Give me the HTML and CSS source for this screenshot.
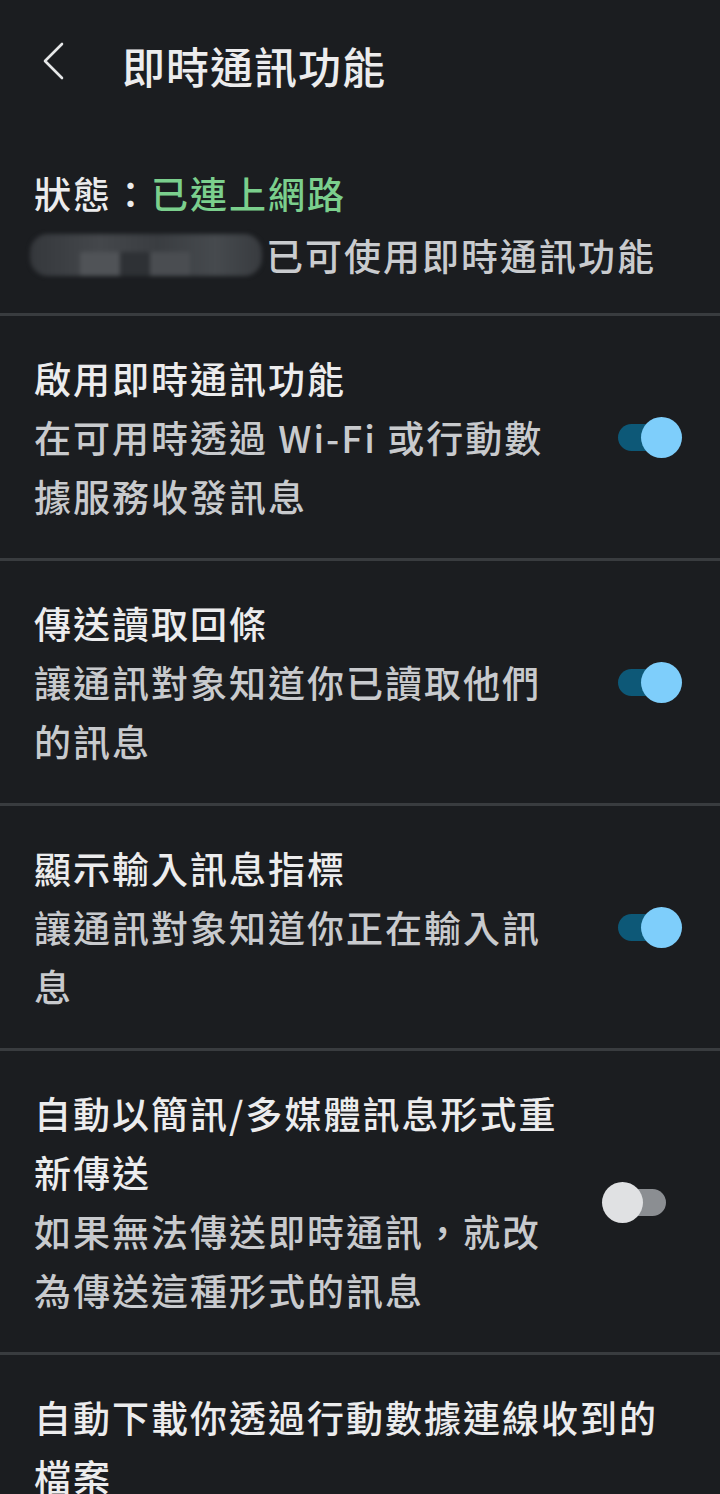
FILE: index.html
```html
<!DOCTYPE html>
<html lang="zh-Hant">
<head>
<meta charset="utf-8">
<title>即時通訊功能</title>
<link rel="stylesheet" href="styles.css">
</head>
<body>
<div class="screen">
  <header class="topbar">
    <svg class="back" width="24" height="40" viewBox="0 0 24 40" aria-hidden="true">
      <path d="M19 2 L2 19 L19 36" fill="none" stroke="#e6e7e8" stroke-width="2.6" stroke-linecap="round" stroke-linejoin="round"/>
    </svg>
    <h1 class="title">即時通訊功能</h1>
  </header>

  <section class="status">
    <div class="status-line">狀態：<span class="ok">已連上網路</span></div>
    <div class="status-line sub"><span class="masked" aria-hidden="true"><i class="m1"></i><i class="m2"></i><i class="m3"></i><i class="m4"></i></span>已可使用即時通訊功能</div>
  </section>

  <div class="row">
    <div class="text">
      <div class="row-title">啟用即時通訊功能</div>
      <div class="row-sub">在可用時透過 Wi-Fi 或行動數據服務收發訊息</div>
    </div>
    <div class="toggle on"><span class="track"></span><span class="thumb"></span></div>
  </div>

  <div class="row">
    <div class="text">
      <div class="row-title">傳送讀取回條</div>
      <div class="row-sub">讓通訊對象知道你已讀取他們的訊息</div>
    </div>
    <div class="toggle on"><span class="track"></span><span class="thumb"></span></div>
  </div>

  <div class="row">
    <div class="text">
      <div class="row-title">顯示輸入訊息指標</div>
      <div class="row-sub">讓通訊對象知道你正在輸入訊息</div>
    </div>
    <div class="toggle on"><span class="track"></span><span class="thumb"></span></div>
  </div>

  <div class="row">
    <div class="text">
      <div class="row-title">自動以簡訊/多媒體訊息形式重新傳送</div>
      <div class="row-sub">如果無法傳送即時通訊，就改為傳送這種形式的訊息</div>
    </div>
    <div class="toggle off"><span class="track"></span><span class="thumb"></span></div>
  </div>

  <div class="row wide">
    <div class="text">
      <div class="row-title">自動下載你透過行動數據連線收到的檔案</div>
    </div>
  </div>
</div>
</body>
</html>
```
FILE: styles.css
```css
html, body {
  margin: 0;
  padding: 0;
  background: #1b1d20;
}

.screen {
  width: 720px;
  min-height: 1494px;
  background: #1b1d20;
  font-family: "Noto Sans CJK TC", "Noto Sans", sans-serif;
  color: #ebebec;
}

.topbar {
  height: 130px;
  display: flex;
  align-items: center;
  padding-left: 43px;
  box-sizing: border-box;
}

.back {
  display: block;
  margin-top: -6px;
}

.title {
  margin: 0 0 0 55px;
  font-size: 43px;
  font-weight: 500;
  letter-spacing: 1px;
  line-height: 60px;
  color: #ececed;
}

.status {
  padding: 32px 34px 27px;
  border-bottom: 3px solid #393c3f;
}

.status-line {
  font-size: 37px;
  line-height: 62px;
  letter-spacing: 2px;
  font-weight: 500;
  color: #ebebec;
  white-space: nowrap;
}

.status-line.sub {
  color: #c9cbce;
  display: flex;
  align-items: center;
}

.ok {
  color: #7bcf8d;
}

.masked {
  position: relative;
  display: inline-block;
  width: 232px;
  height: 50px;
  margin-right: 4px;
  margin-left: -4px;
  filter: blur(2px);
}

.masked i {
  position: absolute;
  display: block;
  border-radius: 18px;
}

.masked .m1 {
  left: 0; top: 4px; width: 232px; height: 42px;
  background: linear-gradient(90deg, #35383c 0%, #44474b 30%, #3a3d41 55%, #464a4e 80%, #383b3f 100%);
}
.masked .m2 {
  left: 50px; top: 22px; width: 40px; height: 24px;
  background: #505357; border-radius: 2px;
}
.masked .m3 {
  left: 90px; top: 22px; width: 30px; height: 24px;
  background: #2e3135; border-radius: 2px;
}
.masked .m4 {
  left: 120px; top: 22px; width: 40px; height: 24px;
  background: #4a4d51; border-radius: 2px;
}

.row {
  display: flex;
  align-items: center;
  padding: 33px 38px 32px 34px;
  border-bottom: 3px solid #393c3f;
}

.row .text {
  width: 540px;
}

.row.wide .text {
  width: 640px;
}

.row-title {
  font-size: 37px;
  line-height: 59px;
  letter-spacing: 2px;
  font-weight: 500;
  color: #ececed;
}

.row-sub {
  font-size: 37px;
  line-height: 59px;
  letter-spacing: 2px;
  font-weight: 500;
  color: #c8cacd;
}

.toggle {
  position: relative;
  margin-left: auto;
  width: 80px;
  height: 41px;
  flex-shrink: 0;
}

.toggle .track {
  position: absolute;
  left: 16px;
  top: 7px;
  width: 48px;
  height: 27px;
  border-radius: 14px;
}

.toggle .thumb {
  position: absolute;
  top: 0;
  width: 41px;
  height: 41px;
  border-radius: 50%;
}

.toggle.on .track { background: #0d5877; }
.toggle.on .thumb { left: 39px; background: #7ecefb; }

.toggle.off .track { background: #8b8e92; }
.toggle.off .thumb { left: 0; background: #e0e1e3; }
```
